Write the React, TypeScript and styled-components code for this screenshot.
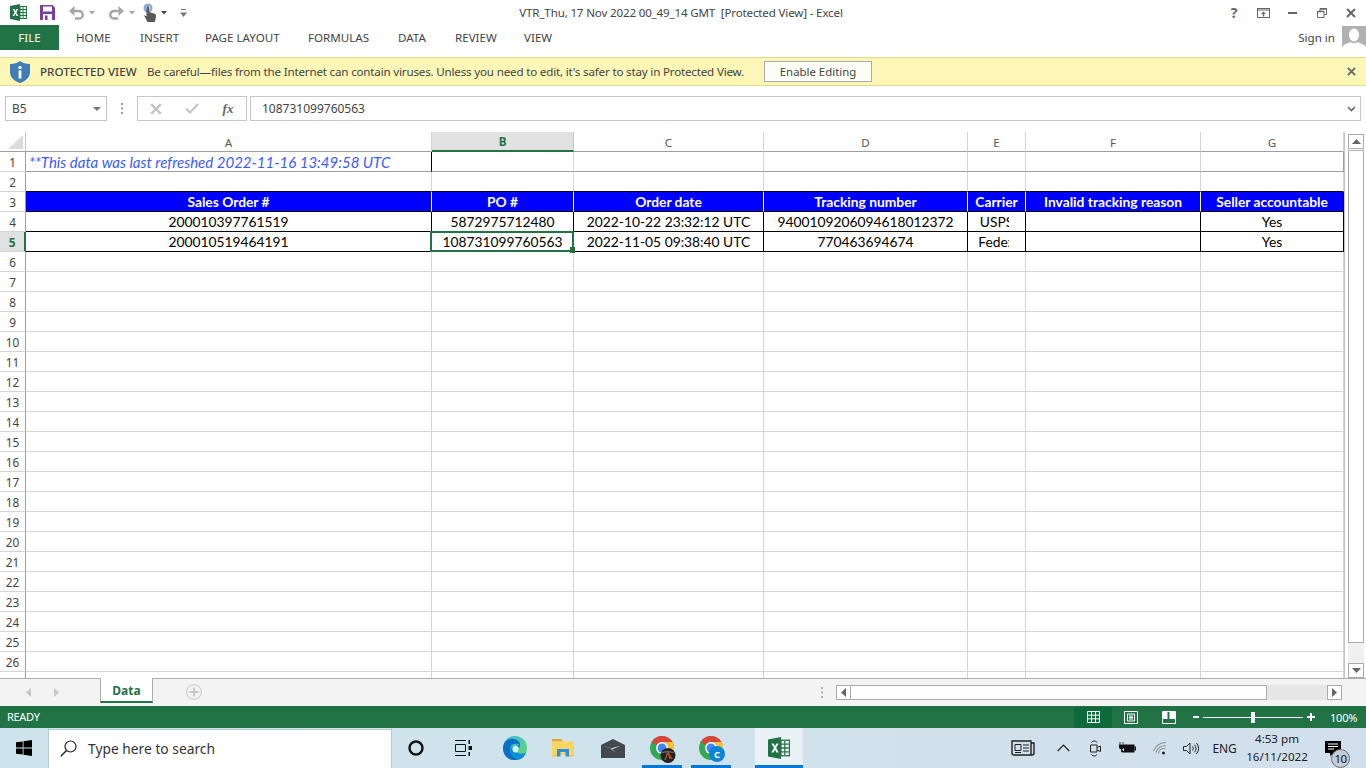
import React from "react";
import styled, { createGlobalStyle } from "styled-components";

const UI_FONT = `"Noto Sans", "Open Sans", "Liberation Sans", sans-serif`;
const CELL_FONT = `Lato, "Liberation Sans", sans-serif`;
const GREEN = "#217346";

const GlobalStyle = createGlobalStyle`
  html, body {
    margin: 0;
    padding: 0;
    width: 1366px;
    height: 768px;
    overflow: hidden;
    background: #ffffff;
    font-family: ${UI_FONT};
  }
`;

const Window = styled.div`
  width: 1366px;
  height: 768px;
  display: flex;
  flex-direction: column;
  background: #ffffff;
  color: #444444;
`;

const TitleBar = styled.div`
  height: 25px;
  display: grid;
  grid-template-columns: 1fr auto 1fr;
  align-items: center;
`;

const Qat = styled.div`
  display: flex;
  align-items: center;
  height: 25px;
`;

const QatItem = styled.span<{ $ml: number }>`
  display: flex;
  margin-left: ${(p) => p.$ml}px;
`;

const DocTitle = styled.div`
  font-size: 11.6px;
  letter-spacing: -0.17px;
  color: #444444;
  white-space: pre;
  margin-right: 4px;
`;

const WinButtons = styled.div`
  display: flex;
  justify-content: flex-end;
`;

const WinButton = styled.span`
  width: 29.3px;
  height: 25px;
  display: flex;
  align-items: center;
  justify-content: center;
`;

const HelpMark = styled(WinButton)`
  font-weight: 700;
  font-size: 14px;
  color: #666666;
`;

const RibbonTabs = styled.div`
  height: 25px;
  display: flex;
  align-items: center;
`;

const FileTab = styled.div`
  width: 59px;
  height: 25px;
  margin-right: 17px;
  background: ${GREEN};
  color: #ffffff;
  font-size: 11.6px;
  display: flex;
  align-items: center;
  justify-content: center;
`;

const RibbonTab = styled.div<{ $w: number }>`
  width: ${(p) => p.$w}px;
  font-size: 11.6px;
  color: #444444;
`;

const SignIn = styled.div`
  margin-left: auto;
  display: flex;
  align-items: center;
  gap: 7px;
  font-size: 11.6px;
`;

const Avatar = styled.span`
  width: 24px;
  height: 24px;
  display: flex;
  background: #b1b1b1;
`;

const ProtectedBar = styled.div`
  margin-top: 7px;
  height: 29px;
  box-sizing: border-box;
  display: flex;
  align-items: center;
  background: #fcf7b6;
  border-top: 1px solid #e2d98a;
  border-bottom: 1px solid #e2d98a;
  padding-left: 10px;
  font-size: 11.6px;
  color: #444444;
`;

const ProtectedTitle = styled.span`
  margin-left: 10px;
  width: 107px;
  font-weight: 500;
  white-space: nowrap;
`;

const ProtectedText = styled.span`
  width: 617px;
  white-space: nowrap;
  letter-spacing: -0.18px;
`;

const EnableButton = styled.button`
  width: 108px;
  height: 21px;
  padding: 0;
  border: 1px solid #ababab;
  background: #fdfdf8;
  color: #444444;
  font-family: ${UI_FONT};
  font-size: 11.4px;
`;

const BarClose = styled.span`
  margin-left: auto;
  margin-right: 10px;
  display: flex;
`;

const FormulaBar = styled.div`
  margin-top: 10px;
  height: 25px;
  display: flex;
  padding: 0 5px;
`;

const FieldBox = styled.div`
  box-sizing: border-box;
  height: 25px;
  border: 1px solid #c6c6c6;
  display: flex;
  align-items: center;
  background: #ffffff;
`;

const NameBox = styled(FieldBox)`
  width: 102px;
  padding: 0 5px 0 6px;
  justify-content: space-between;
  font-size: 12px;
`;

const FormulaGrip = styled.span`
  width: 30px;
  display: flex;
  align-items: center;
  justify-content: center;
`;

const FormulaButtons = styled.div`
  box-sizing: border-box;
  width: 110px;
  height: 25px;
  margin-right: 3px;
  border: 1px solid #c6c6c6;
  display: grid;
  grid-template-columns: repeat(3, 36px);
  align-items: center;
  justify-items: center;
`;

const FormulaInput = styled(FieldBox)`
  flex: 1;
  padding: 0 4px 0 11px;
  justify-content: space-between;
  font-size: 12px;
`;

const FxLabel = styled.span`
  font-family: "Liberation Serif", serif;
  font-style: italic;
  font-weight: 700;
  font-size: 13px;
  color: #666666;
`;

const SheetArea = styled.div`
  margin-top: 11px;
  height: 546px;
  display: flex;
  overflow: hidden;
`;

const Grid = styled.div`
  box-sizing: content-box;
  width: 1344px;
  display: grid;
  grid-template-columns: 26px 406px 142px 190px 204px 58px 175px 143px;
  grid-auto-rows: 20px;
  overflow: hidden;
  font-family: ${CELL_FONT};
  border-right: 1px solid #c6c6c6;
`;

const Corner = styled.div`
  box-sizing: border-box;
  border-right: 1px solid #c6c6c6;
  border-bottom: 1px solid #9e9e9e;
  display: flex;
  align-items: flex-end;
  justify-content: flex-end;
  padding: 0 2px 2px 0;
`;

const ColHeader = styled.div<{ $active?: boolean }>`
  box-sizing: border-box;
  display: flex;
  align-items: center;
  justify-content: center;
  font-family: ${UI_FONT};
  font-size: 11.6px;
  padding-top: 1px;
  color: ${(p) => (p.$active ? GREEN : "#555555")};
  font-weight: ${(p) => (p.$active ? 700 : 400)};
  background: ${(p) => (p.$active ? "#e1e1e1" : "#ffffff")};
  border-right: 1px solid ${(p) => (p.$active ? "#c6c6c6" : "#d4d4d4")};
  border-bottom: ${(p) => (p.$active ? `2px solid ${GREEN}` : "1px solid #9e9e9e")};
`;

const RowHeader = styled.div<{ $active?: boolean }>`
  box-sizing: border-box;
  display: flex;
  align-items: center;
  justify-content: center;
  font-family: ${UI_FONT};
  font-size: 11.8px;
  padding-top: 1px;
  color: ${(p) => (p.$active ? GREEN : "#444444")};
  font-weight: ${(p) => (p.$active ? 700 : 400)};
  background: ${(p) => (p.$active ? "#e1e1e1" : "#ffffff")};
  border-right: ${(p) => (p.$active ? `2px solid ${GREEN}` : "1px solid #9e9e9e")};
  border-bottom: 1px solid #d4d4d4;
`;

const Cell = styled.div<{ $right?: string; $bottom?: string }>`
  box-sizing: border-box;
  position: relative;
  display: flex;
  align-items: center;
  justify-content: center;
  font-size: 13.8px;
  color: #000000;
  white-space: nowrap;
  overflow: visible;
  border-right: 1px solid ${(p) => p.$right || "#d4d4d4"};
  border-bottom: 1px solid ${(p) => p.$bottom || "#d4d4d4"};
`;

const NoteCell = styled(Cell)`
  justify-content: flex-start;
  padding-left: 3px;
  font-size: 15px;
  font-style: italic;
  color: #3b5cfb;
`;

const HeadCell = styled(Cell)`
  background: #0000ff;
  color: #ffffff;
  font-weight: 700;
`;

const SelectedCell = styled(Cell)`
  &::after {
    content: "";
    position: absolute;
    left: -2px;
    top: -1px;
    right: -1px;
    bottom: -1px;
    border: 2px solid ${GREEN};
  }
  &::before {
    content: "";
    position: absolute;
    right: -2px;
    bottom: -2px;
    width: 5px;
    height: 6px;
    background: ${GREEN};
    z-index: 1;
  }
`;

const ClippedText = styled.span`
  width: 100%;
  text-align: center;
  clip-path: inset(0 16px 0 0);
`;

const VScroll = styled.div`
  margin-left: 3px;
  width: 16px;
  display: flex;
  flex-direction: column;
  padding-top: 2px;
`;

const ScrollButton = styled.span`
  box-sizing: border-box;
  flex: none;
  width: 16px;
  height: 15px;
  border: 1px solid #ababab;
  background: #ffffff;
  display: flex;
  align-items: center;
  justify-content: center;
`;

const VThumb = styled.div`
  box-sizing: border-box;
  height: 493px;
  margin-top: 1px;
  border: 1px solid #ababab;
  background: #ffffff;
`;

const VTrack = styled.div`
  flex: 1;
  background: #f0f0f0;
`;

const SheetBar = styled.div`
  height: 28px;
  box-sizing: border-box;
  border-top: 1px solid #ababab;
  background: #f3f3f3;
  display: flex;
  align-items: flex-start;
`;

const SheetNav = styled.div`
  width: 100px;
  height: 26px;
  display: flex;
  align-items: center;
  gap: 23px;
  padding-left: 26px;
  box-sizing: border-box;
`;

const SheetTab = styled.div`
  box-sizing: border-box;
  width: 53px;
  height: 25px;
  margin-top: -1px;
  padding-top: 2px;
  background: #ffffff;
  border: 1px solid #ababab;
  border-top: none;
  border-bottom: 2px solid ${GREEN};
  display: flex;
  align-items: center;
  justify-content: center;
  color: ${GREEN};
  font-size: 12px;
  font-weight: 700;
`;

const AddSheet = styled.span`
  margin: 5px 0 0 33px;
  display: flex;
`;

const HScrollWrap = styled.div`
  margin-left: auto;
  display: flex;
  align-items: center;
  height: 26px;
  padding-right: 24px;
`;

const HScrollGrip = styled.span`
  margin-right: 13px;
  display: flex;
`;

const HButton = styled(ScrollButton)`
  width: 15px;
`;

const HThumb = styled.div`
  box-sizing: border-box;
  width: 416px;
  height: 15px;
  border: 1px solid #ababab;
  border-left: none;
  background: #ffffff;
`;

const HTrack = styled.div`
  width: 60px;
  height: 15px;
  background: #e6e6e6;
`;

const StatusBar = styled.div`
  height: 22px;
  display: flex;
  align-items: center;
  background: ${GREEN};
  color: #ffffff;
  font-size: 11px;
  padding-left: 7px;
`;

const ReadyText = styled.span`
  letter-spacing: -0.3px;
  margin-top: -2px;
`;

const ViewButton = styled.span<{ $active?: boolean }>`
  width: 38px;
  height: 21px;
  display: flex;
  align-items: center;
  justify-content: center;
  background: ${(p) => (p.$active ? "#0f6a3b" : "transparent")};
`;

const StatusRight = styled.div`
  margin-left: auto;
  display: flex;
  align-items: center;
`;

const ZoomSlider = styled.div`
  margin-left: 5px;
  width: 122px;
  display: flex;
  align-items: center;
`;

const SliderTrack = styled.div`
  position: relative;
  flex: 1;
  height: 1px;
  margin: 0 4px;
  background: #ffffff;
  &::after {
    content: "";
    position: absolute;
    left: 48px;
    top: -5px;
    width: 4px;
    height: 11px;
    background: #ffffff;
  }
`;

const ZoomPct = styled.span`
  width: 51px;
  padding-left: 15px;
  box-sizing: border-box;
  font-size: 11px;
  letter-spacing: -0.2px;
`;

const Taskbar = styled.div`
  height: 40px;
  display: flex;
  align-items: stretch;
  background: linear-gradient(90deg, #cde4ed 0%, #cfe3ec 45%, #d3dfec 100%);
  color: #111111;
`;

const StartButton = styled.span`
  width: 48px;
  display: flex;
  align-items: center;
  justify-content: center;
`;

const SearchBox = styled.div`
  box-sizing: border-box;
  width: 344px;
  margin-top: 1px;
  padding-bottom: 2px;
  background: #ffffff;
  border: 1px solid #b8c8d0;
  border-bottom: none;
  display: flex;
  align-items: center;
  padding-left: 11px;
  gap: 11px;
  font-size: 13.8px;
  color: #333333;
`;

const TaskItem = styled.span<{ $w: number; $ml?: number; $open?: boolean; $active?: boolean }>`
  box-sizing: border-box;
  width: ${(p) => p.$w}px;
  margin-left: ${(p) => p.$ml || 0}px;
  display: flex;
  align-items: center;
  justify-content: center;
  position: relative;
  background: ${(p) => (p.$active ? "#e9f1f6" : "transparent")};
  border-bottom: 3px solid ${(p) => (p.$open ? "#0078d7" : "transparent")};
  padding-top: 3px;
`;

const Tray = styled.div`
  margin-left: auto;
  display: flex;
  align-items: center;
`;

const TrayItem = styled.span<{ $w: number }>`
  width: ${(p) => p.$w}px;
  display: flex;
  align-items: center;
  justify-content: center;
`;

const TrayText = styled.span`
  width: 31px;
  text-align: center;
  font-size: 12px;
  letter-spacing: -0.2px;
  color: #222222;
`;

const Clock = styled.div`
  width: 66px;
  margin-left: 4px;
  text-align: center;
  font-size: 11.6px;
  line-height: 18.5px;
  color: #222222;
`;

const NotifyWrap = styled.span`
  width: 56px;
  box-sizing: border-box;
  padding-left: 15px;
  display: flex;
  position: relative;
`;

const NotifyBadge = styled.span`
  position: absolute;
  left: 21px;
  top: 8px;
  width: 19px;
  height: 19px;
  box-sizing: border-box;
  border: 1px solid #6f6f6f;
  border-radius: 50%;
  background: #c4ccd6;
  display: flex;
  align-items: center;
  justify-content: center;
  font-size: 11.5px;
  letter-spacing: -0.5px;
  color: #111111;
`;

const PhotoBadge = styled.span`
  position: absolute;
  left: 18px;
  top: 20px;
  display: flex;
`;

const LetterBadge = styled.span`
  position: absolute;
  left: 18px;
  top: 18px;
  width: 16px;
  height: 16px;
  border-radius: 50%;
  background: #0a84d6;
  color: #ffffff;
  display: flex;
  align-items: center;
  justify-content: center;
  font-size: 9.5px;
  font-weight: 700;
`;

const ExcelIcon = ({ size = 17 }: { size?: number }) => (
  <svg width={size} height={size} viewBox="0 0 17 17">
    <rect x="6" y="2.5" width="10.5" height="12" fill="#fff" stroke="#217346" />
    <path d="M10 3v11M13 3v11M7 5.5h9M7 8.5h9M7 11.5h9" stroke="#217346" strokeWidth="1" />
    <path d="M0 2l10-2v17L0 15z" fill="#217346" />
    <path d="M2.6 5h1.8l1 2.1L6.5 5h1.7L6.3 8.400l2 3.600H6.500L5.400 9.800 4.300 12H2.600l2-3.600z" fill="#fff" />
  </svg>
);

const SaveIcon = () => (
  <svg width="15" height="15" viewBox="0 0 15 15">
    <path d="M0 0h12.500L15 2.500V15H0z" fill="#7b3f9d" />
    <rect x="3" y="1.500" width="9" height="5" fill="#fff" />
    <rect x="3" y="9" width="9" height="6" fill="#fff" />
    <rect x="5" y="10.500" width="2.500" height="4.500" fill="#7b3f9d" />
  </svg>
);

const UndoIcon = ({ flip }: { flip?: boolean }) => (
  <svg width="15" height="14" viewBox="0 0 15 14" style={flip ? { transform: "scaleX(-1)" } : undefined}>
    <path d="M4 5h6a3.700 3.700 0 0 1 0 7.500H6" fill="none" stroke="#a6a6a6" strokeWidth="2.400" />
    <path d="M5.500 0v10L0 5z" fill="#a6a6a6" />
  </svg>
);

const Caret = ({ color = "#a6a6a6" }: { color?: string }) => (
  <svg width="6" height="4" viewBox="0 0 6 4">
    <path d="M0 0h6L3 3.500z" fill={color} />
  </svg>
);

const TouchIcon = () => (
  <svg width="14" height="19" viewBox="0 0 14 19">
    <circle cx="5" cy="5" r="4.500" fill="#7fa9d6" />
    <circle cx="5" cy="5" r="2.300" fill="#dbe8f5" />
    <path d="M3.500 4.500a1.300 1.300 0 0 1 2.600 0V9l5 1.500c1.500.5 2 1 2 2.500L12 19H4.500L1 12.500 3.500 13z" fill="#5a5a5a" />
  </svg>
);

const CustomizeIcon = () => (
  <svg width="7" height="8" viewBox="0 0 7 8">
    <path d="M1 0h5v1H1zM0 3.500h7L3.500 8z" fill="#777" />
  </svg>
);

const Cross = ({ size = 9, color = "#666", w = 2 }: { size?: number; color?: string; w?: number }) => (
  <svg width={size} height={size} viewBox="0 0 10 10">
    <path d="M1 1l8 8M9 1l-8 8" stroke={color} strokeWidth={w} fill="none" />
  </svg>
);

const RibbonDisplayIcon = () => (
  <svg width="13" height="10" viewBox="0 0 13 10">
    <rect x=".5" y=".5" width="12" height="9" fill="none" stroke="#666" />
    <path d="M1 2h11" stroke="#666" />
    <path d="M6.500 3.500L9 6H7.200v2.500H5.800V6H4z" fill="#666" />
  </svg>
);

const RestoreIcon = () => (
  <svg width="10" height="10" viewBox="0 0 10 10">
    <path d="M.5 3.500h6.500v6H.5zM3 3.500V.5h6.500v6H7" fill="none" stroke="#666" />
    <path d="M.5 3.500h6.500M3 1h6.500" stroke="#666" strokeWidth="1.500" />
  </svg>
);

const AvatarIcon = () => (
  <svg width="24" height="24" viewBox="0 0 24 24">
    <ellipse cx="12" cy="9" rx="5" ry="6.500" fill="#fff" />
    <path d="M0 24v-3c2-3 6-3.500 8-5 2.500 1.500 5.500 1.500 8 0 2 1.500 6 2 8 5v3z" fill="#fff" />
  </svg>
);

const ShieldIcon = () => (
  <svg width="20" height="22" viewBox="0 0 20 22">
    <path d="M10 0c2.500 2 5.500 3 10 3v8c0 5-4 9-10 11C4 20 0 16 0 11V3c4.500 0 7.500-1 10-3z" fill="#3f7cb8" />
    <circle cx="10" cy="6.500" r="1.700" fill="#fff" />
    <rect x="8.600" y="9.500" width="2.800" height="8" fill="#fff" />
  </svg>
);

const Grip = ({ color = "#9a9a9a" }: { color?: string }) => (
  <svg width="2" height="11" viewBox="0 0 2 11">
    <path d="M0 0h2v2H0zM0 4.500h2v2H0zM0 9h2v2H0z" fill={color} />
  </svg>
);

const Arrow = ({ dir, color = "#666" }: { dir: "up" | "down" | "left" | "right"; color?: string }) => {
  const d = {
    up: "M0 5h9L4.500 0z",
    down: "M0 0h9L4.500 5z",
    left: "M5 0v9L0 4.500z",
    right: "M0 0v9l5-4.500z",
  }[dir];
  const vertical = dir === "up" || dir === "down";
  return (
    <svg width={vertical ? 9 : 5} height={vertical ? 5 : 9} viewBox={vertical ? "0 0 9 5" : "0 0 5 9"}>
      <path d={d} fill={color} />
    </svg>
  );
};

const NormalViewIcon = () => (
  <svg width="13" height="12" viewBox="0 0 13 12">
    <path d="M.5.500h12v11H.5zM4.500.500v11M8.500.500v11M.5 4.170h12M.5 7.830h12" stroke="#fff" fill="none" />
  </svg>
);

const LayoutViewIcon = () => (
  <svg width="14" height="13" viewBox="0 0 14 13">
    <path d="M.5.500h13v12H.5z" stroke="#fff" fill="none" />
    <path d="M3.500 3h7v7h-7zM5 5h4M5 6.500h4M5 8h4" stroke="#fff" fill="none" />
  </svg>
);

const BreakViewIcon = () => (
  <svg width="14" height="13" viewBox="0 0 14 13">
    <path d="M.5.500h13v12H.5z" stroke="#fff" fill="none" />
    <path d="M1 1h4.500v7H1zM7.500 1H13v7H7.500z" fill="#fff" />
  </svg>
);

const WindowsLogo = () => (
  <svg width="16" height="16" viewBox="0 0 16 16">
    <path d="M0 2.300l6.700-.9v6.200H0zM7.500 1.300L16 0v7.600H7.500zM0 8.400h6.700v6.200L0 13.700zM7.500 8.400H16V16l-8.500-1.200z" fill="#000" />
  </svg>
);

const SearchGlass = () => (
  <svg width="17" height="17" viewBox="0 0 17 17">
    <circle cx="10.500" cy="6.500" r="5.500" fill="none" stroke="#222" strokeWidth="1.200" />
    <path d="M6.500 10.500L.8 16.200" stroke="#222" strokeWidth="1.400" />
  </svg>
);

const TaskViewIcon = () => (
  <svg width="17" height="16" viewBox="0 0 17 16">
    <path d="M0 .500h11M0 15.500h11M.5 4.500h10v7H.5z" stroke="#111" fill="none" />
    <path d="M13.500 0h1.500v4h-1.500zM13.500 6h3.500v4h-3.500zM13.500 12h1.500v4h-1.500z" fill="#111" />
  </svg>
);

const EdgeIcon = () => (
  <svg width="24" height="24" viewBox="0 0 24 24">
    <defs>
      <linearGradient id="edgeTop" x1="0" y1="0" x2="1" y2="1">
        <stop offset="0" stopColor="#33b7d8" />
        <stop offset="1" stopColor="#6fdc6a" />
      </linearGradient>
    </defs>
    <circle cx="12" cy="12" r="12" fill="url(#edgeTop)" />
    <path d="M0 12C.5 5 6 2 11 3c4 .8 6 3.500 6 6-3-2-8-2-9.500 2-1.500 5 2 11 8.500 12.500C6 26 0 20 0 12z" fill="#0b6fc4" />
    <path d="M16 23.500C10 23 6 17 7.500 12.500 9 9 14 8 17 9c.5 2-1 3.500-3.500 3.500-2 0-1.500 3 1.500 4.500 3 1.300 6 .5 8-1-1 4-4 7.200-7 7.500z" fill="#0d8fd8" />
    <ellipse cx="12.500" cy="13" rx="3" ry="3.500" fill="#d9f3ec" />
  </svg>
);

const FolderIcon = () => (
  <svg width="22" height="18" viewBox="0 0 22 18">
    <path d="M0 0h9l2 2.500H0z" fill="#e0a526" />
    <path d="M0 2.500h22V16H0z" fill="#fcd565" />
    <path d="M5 10h12v7.500h-3.500V13h-5v4.500H5z" fill="#2e8fd9" />
    <path d="M0 16h5v1.500H0zM17 16h5v1.500h-5z" fill="#f3c13e" />
  </svg>
);

const MailIcon = () => (
  <svg width="24" height="19" viewBox="0 0 24 19">
    <path d="M0 6l12-6 12 6v13H0z" fill="#43484d" />
    <path d="M0 6.500l12 3.500 8-3.500-9.500 2.800 1.500 2 4.500 3-5.500-3.200L9.500 9z" fill="#e4eef3" />
  </svg>
);

const ChromeIcon = () => (
  <svg width="24" height="24" viewBox="0 0 24 24">
    <circle cx="12" cy="12" r="12" fill="#34a853" />
    <path d="M1.600 6A12 12 0 0 1 22.400 6H12a6 6 0 0 0-5.200 3z" fill="#db4437" />
    <path d="M22.400 6A12 12 0 0 1 12 24l5.200-9A6 6 0 0 0 12 6z" fill="#fbc02d" />
    <circle cx="12" cy="12" r="6" fill="#fff" />
    <circle cx="12" cy="12" r="4.500" fill="#4285f4" />
  </svg>
);

const ProfilePhoto = () => (
  <svg width="16" height="15" viewBox="0 0 16 15">
    <circle cx="8" cy="7.500" r="7.500" fill="#262223" />
    <path d="M5 12l3-8M8 4l2 7M9 6l3 5" fill="none" stroke="#b5521f" strokeWidth="1.300" />
    <path d="M0 6c3-4 12-4 16 0-4-2-12-2-16 0z" fill="#6b6a68" />
  </svg>
);

const NewsIcon = () => (
  <svg width="24" height="16" viewBox="0 0 24 16">
    <path d="M1 1h19v14H3a2 2 0 0 1-2-2zM20 3h3v10a2 2 0 0 1-2 2h-1" fill="none" stroke="#222" strokeWidth="1.400" />
    <path d="M4 4.500h6v6H4z" fill="none" stroke="#222" />
    <path d="M12 5h6M12 8h6M12 11h6M4 12.500h6" stroke="#222" />
  </svg>
);

const ChevronIcon = () => (
  <svg width="13" height="8" viewBox="0 0 13 8">
    <path d="M.7 7l5.800-6 5.800 6" fill="none" stroke="#222" strokeWidth="1.200" />
  </svg>
);

const MeetIcon = () => (
  <svg width="11" height="17" viewBox="0 0 11 17">
    <path d="M.5 5h6.500v7H.5z" fill="none" stroke="#222" />
    <path d="M7 7.500L10.500 6v5.500L7 10" fill="none" stroke="#222" />
    <path d="M1.500 2.500C2.500.500 6 .500 7 2.500M1.500 14.500c1 2 4.500 2 5.500 0" fill="none" stroke="#222" />
  </svg>
);

const PowerIcon = () => (
  <svg width="17" height="12" viewBox="0 0 17 12">
    <path d="M5 2.500h10.500v8H5z" fill="#111" />
    <rect x="15.500" y="4.500" width="1.500" height="4" fill="#111" />
    <path d="M0 3h5v2.500L3.500 7h-2L0 5.500zM1 0v3M4 0v3M2.500 7v3h3" fill="#111" stroke="#111" strokeWidth=".8" />
  </svg>
);

const WifiIcon = () => (
  <svg width="14" height="13" viewBox="0 0 14 13">
    <path d="M.5 9A13 13 0 0 1 13 .5M3 10.500A9 9 0 0 1 13 3.800M5.500 11.500a5 5 0 0 1 7-4.500" fill="none" stroke="#8b9299" strokeWidth="1.100" />
    <circle cx="10.500" cy="11" r="1.500" fill="#222" />
  </svg>
);

const VolumeIcon = () => (
  <svg width="17" height="13" viewBox="0 0 17 13">
    <path d="M.5 4.500h3L7 1v11L3.500 8.500h-3z" fill="none" stroke="#222" />
    <path d="M9.500 4.500a3 3 0 0 1 0 4M11.500 2.800a6 6 0 0 1 0 7.500M13.500 1a9 9 0 0 1 0 11" fill="none" stroke="#222" />
  </svg>
);

const NotifyIcon = () => (
  <svg width="16" height="15" viewBox="0 0 16 15">
    <path d="M0 0h16v12H9l-4 3v-3H0z" fill="#000" />
    <path d="M3 3h10M3 5.500h10M3 8h6" stroke="#fff" />
  </svg>
);

const columns = ["A", "B", "C", "D", "E", "F", "G"];
const headings = [
  "Sales Order #",
  "PO #",
  "Order date",
  "Tracking number",
  "Carrier",
  "Invalid tracking reason",
  "Seller accountable",
];
const dataRows = [
  ["200010397761519", "5872975712480", "2022-10-22 23:32:12 UTC", "9400109206094618012372", "USPS", "", "Yes"],
  ["200010519464191", "108731099760563", "2022-11-05 09:38:40 UTC", "770463694674", "Fedex", "", "Yes"],
];
const ribbonTabs: [string, number][] = [
  ["HOME", 64],
  ["INSERT", 65],
  ["PAGE LAYOUT", 103],
  ["FORMULAS", 90],
  ["DATA", 57],
  ["REVIEW", 69],
  ["VIEW", 50],
];
const emptyRows = Array.from({ length: 22 }, (_, i) => i + 6);

const App: React.FC = () => (
  <Window>
    <GlobalStyle />
    <TitleBar>
      <Qat>
        <QatItem $ml={10}><ExcelIcon /></QatItem>
        <QatItem $ml={13}><SaveIcon /></QatItem>
        <QatItem $ml={14}><UndoIcon /></QatItem>
        <QatItem $ml={5}><Caret /></QatItem>
        <QatItem $ml={14}><UndoIcon flip /></QatItem>
        <QatItem $ml={5}><Caret /></QatItem>
        <QatItem $ml={8}><TouchIcon /></QatItem>
        <QatItem $ml={4}><Caret color="#444" /></QatItem>
        <QatItem $ml={13}><CustomizeIcon /></QatItem>
      </Qat>
      <DocTitle>VTR_Thu, 17 Nov 2022 00_49_14 GMT  [Protected View] - Excel</DocTitle>
      <WinButtons>
        <HelpMark>?</HelpMark>
        <WinButton><RibbonDisplayIcon /></WinButton>
        <WinButton>
          <svg width="9" height="2" viewBox="0 0 9 2"><rect width="9" height="2" fill="#666" /></svg>
        </WinButton>
        <WinButton><RestoreIcon /></WinButton>
        <WinButton><Cross size={10} /></WinButton>
      </WinButtons>
    </TitleBar>

    <RibbonTabs>
      <FileTab>FILE</FileTab>
      {ribbonTabs.map(([label, w]) => (
        <RibbonTab key={label} $w={w}>{label}</RibbonTab>
      ))}
      <SignIn>
        Sign in
        <Avatar><AvatarIcon /></Avatar>
      </SignIn>
    </RibbonTabs>

    <ProtectedBar>
      <ShieldIcon />
      <ProtectedTitle>PROTECTED VIEW</ProtectedTitle>
      <ProtectedText>Be careful—files from the Internet can contain viruses. Unless you need to edit, it's safer to stay in Protected View.</ProtectedText>
      <EnableButton>Enable Editing</EnableButton>
      <BarClose><Cross size={9} /></BarClose>
    </ProtectedBar>

    <FormulaBar>
      <NameBox>
        B5
        <svg width="8" height="4" viewBox="0 0 8 4"><path d="M0 0h8L4 4z" fill="#777" /></svg>
      </NameBox>
      <FormulaGrip><Grip /></FormulaGrip>
      <FormulaButtons>
        <Cross size={12} color="#c4c4c4" />
        <svg width="14" height="11" viewBox="0 0 14 11">
          <path d="M1 5.500l4 4L13 1" fill="none" stroke="#c4c4c4" strokeWidth="2" />
        </svg>
        <FxLabel>fx</FxLabel>
      </FormulaButtons>
      <FormulaInput>
        108731099760563
        <svg width="9" height="6" viewBox="0 0 9 6">
          <path d="M1 1l3.500 3.500L8 1" fill="none" stroke="#666" strokeWidth="1.600" />
        </svg>
      </FormulaInput>
    </FormulaBar>

    <SheetArea>
      <Grid>
        <Corner>
          <svg width="15" height="14" viewBox="0 0 15 14"><path d="M15 0v14H0z" fill="#dcdcdc" /></svg>
        </Corner>
        {columns.map((c) => (
          <ColHeader key={c} $active={c === "B"}>{c}</ColHeader>
        ))}

        <RowHeader>1</RowHeader>
        <NoteCell $right="#000" $bottom="#9e9e9e">**This data was last refreshed 2022-11-16 13:49:58 UTC</NoteCell>
        {columns.slice(1).map((c) => (
          <Cell key={c} $bottom="#9e9e9e" $right={c === "G" ? "#9e9e9e" : undefined} />
        ))}

        <RowHeader>2</RowHeader>
        {columns.map((c) => (
          <Cell key={c} $bottom="#000" />
        ))}

        <RowHeader>3</RowHeader>
        {headings.map((h, i) => (
          <HeadCell key={h} $bottom="#000" $right={i === 6 ? "#000" : "#fff"}>{h}</HeadCell>
        ))}

        {dataRows.map((row, r) => (
          <React.Fragment key={row[0]}>
            <RowHeader $active={r === 1}>{r + 4}</RowHeader>
            {row.map((v, i) => {
              if (r === 1 && i === 1) {
                return <SelectedCell key={i} $right="#000" $bottom="#000">{v}</SelectedCell>;
              }
              return (
                <Cell key={i} $right="#000" $bottom="#000">
                  {i === 4 ? <ClippedText>{v}</ClippedText> : v}
                </Cell>
              );
            })}
          </React.Fragment>
        ))}

        {emptyRows.map((n) => (
          <React.Fragment key={n}>
            {/* row 27 is only a sliver here, its number does not show */}
            <RowHeader>{n < 27 ? n : ""}</RowHeader>
            {columns.map((c) => (
              <Cell key={c} />
            ))}
          </React.Fragment>
        ))}
      </Grid>
      <VScroll>
        <ScrollButton><Arrow dir="up" /></ScrollButton>
        <VThumb />
        <VTrack />
        <ScrollButton><Arrow dir="down" /></ScrollButton>
      </VScroll>
    </SheetArea>

    <SheetBar>
      <SheetNav>
        <Arrow dir="left" color="#c6c6c6" />
        <Arrow dir="right" color="#c6c6c6" />
      </SheetNav>
      <SheetTab>Data</SheetTab>
      <AddSheet>
        <svg width="16" height="16" viewBox="0 0 16 16">
          <circle cx="8" cy="8" r="7.400" fill="none" stroke="#c6c6c6" />
          <path d="M8 3.500v9M3.500 8h9" stroke="#c6c6c6" strokeWidth="2" />
        </svg>
      </AddSheet>
      <HScrollWrap>
        <HScrollGrip><Grip color="#b0b0b0" /></HScrollGrip>
        <HButton><Arrow dir="left" /></HButton>
        <HThumb />
        <HTrack />
        <HButton><Arrow dir="right" /></HButton>
      </HScrollWrap>
    </SheetBar>

    <StatusBar>
      <ReadyText>READY</ReadyText>
      <StatusRight>
        <ViewButton $active><NormalViewIcon /></ViewButton>
        <ViewButton><LayoutViewIcon /></ViewButton>
        <ViewButton><BreakViewIcon /></ViewButton>
        <ZoomSlider>
          <svg width="6" height="2" viewBox="0 0 6 2"><rect width="6" height="2" fill="#fff" /></svg>
          <SliderTrack />
          <svg width="8" height="8" viewBox="0 0 8 8"><path d="M3 0h2v3h3v2H5v3H3V5H0V3h3z" fill="#fff" /></svg>
        </ZoomSlider>
        <ZoomPct>100%</ZoomPct>
      </StatusRight>
    </StatusBar>

    <Taskbar>
      <StartButton><WindowsLogo /></StartButton>
      <SearchBox>
        <SearchGlass />
        Type here to search
      </SearchBox>
      <TaskItem $w={48}>
        <svg width="16" height="16" viewBox="0 0 16 16">
          <circle cx="8" cy="8" r="6.500" fill="none" stroke="#111" strokeWidth="2.400" />
        </svg>
      </TaskItem>
      <TaskItem $w={47}><TaskViewIcon /></TaskItem>
      <TaskItem $w={48} $ml={4}><EdgeIcon /></TaskItem>
      <TaskItem $w={48}><FolderIcon /></TaskItem>
      <TaskItem $w={48} $ml={2}><MailIcon /></TaskItem>
      <TaskItem $w={40} $ml={5} $open>
        <ChromeIcon />
        <PhotoBadge><ProfilePhoto /></PhotoBadge>
      </TaskItem>
      <TaskItem $w={40} $ml={9} $open>
        <ChromeIcon />
        <LetterBadge>C</LetterBadge>
      </TaskItem>
      <TaskItem $w={48} $ml={24} $open $active><ExcelIcon size={22} /></TaskItem>
      <Tray>
        <TrayItem $w={40}><NewsIcon /></TrayItem>
        <TrayItem $w={40}><ChevronIcon /></TrayItem>
        <TrayItem $w={24}><MeetIcon /></TrayItem>
        <TrayItem $w={40}><PowerIcon /></TrayItem>
        <TrayItem $w={26}><WifiIcon /></TrayItem>
        <TrayItem $w={36}><VolumeIcon /></TrayItem>
        <TrayText>ENG</TrayText>
        <Clock>4:53 pm<br />16/11/2022</Clock>
        <NotifyWrap>
          <NotifyIcon />
          <NotifyBadge>10</NotifyBadge>
        </NotifyWrap>
      </Tray>
    </Taskbar>
  </Window>
);

export default App;
